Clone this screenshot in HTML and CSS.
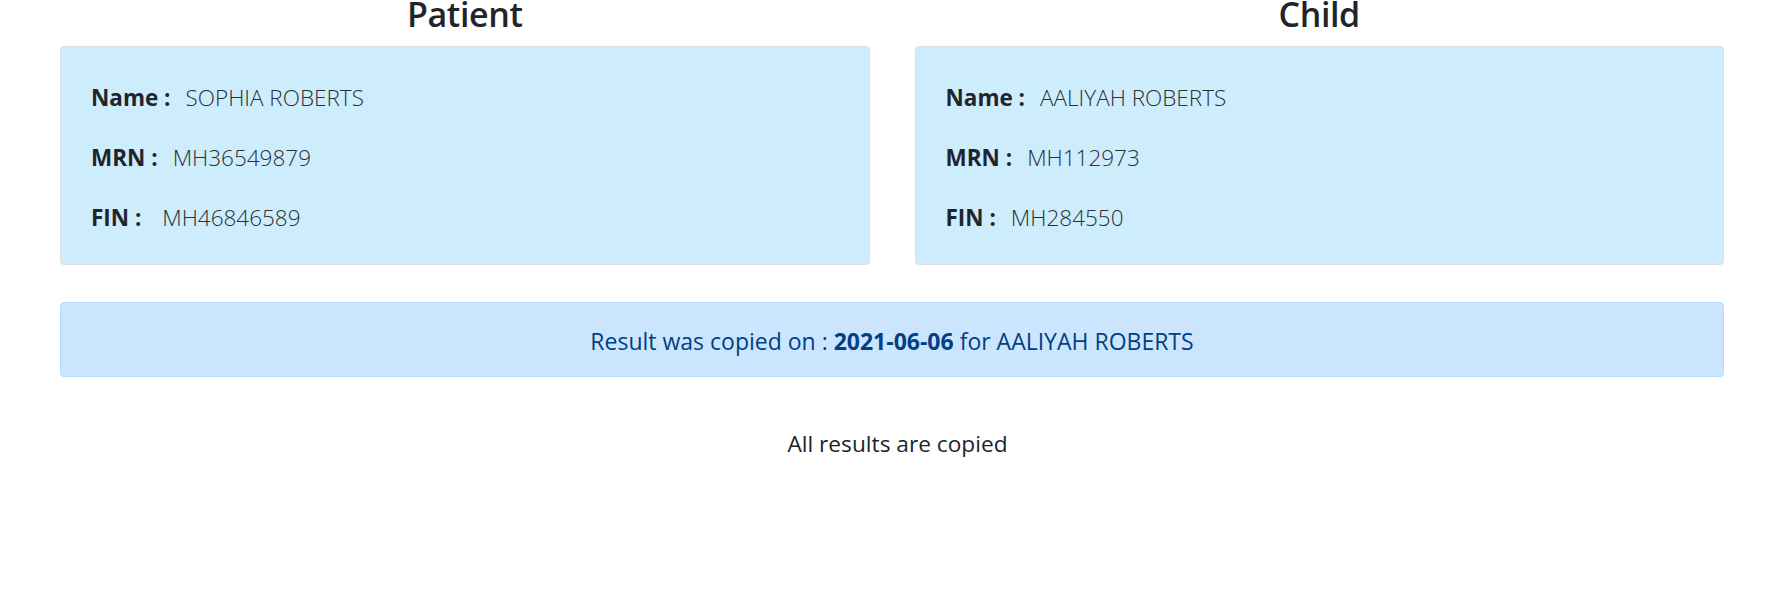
FILE: index.html
```html
<!DOCTYPE html>
<html lang="en">
<head>
<meta charset="utf-8">
<title>Copied results</title>
<link rel="stylesheet" href="styles.css">
</head>
<body>
<div class="page">
  <div class="cols">
    <section class="col">
      <h2 class="title">Patient</h2>
      <div class="card">
        <p class="row"><span class="label">Name :</span><span class="value">SOPHIA ROBERTS</span></p>
        <p class="row"><span class="label">MRN :</span><span class="value">MH36549879</span></p>
        <p class="row"><span class="label">FIN :</span><span class="value">&nbsp;MH46846589</span></p>
      </div>
    </section>
    <section class="col">
      <h2 class="title">Child</h2>
      <div class="card">
        <p class="row"><span class="label">Name :</span><span class="value">AALIYAH ROBERTS</span></p>
        <p class="row"><span class="label">MRN :</span><span class="value">MH112973</span></p>
        <p class="row"><span class="label">FIN :</span><span class="value">MH284550</span></p>
      </div>
    </section>
  </div>
  <div class="alert">Result was copied on : <strong>2021-06-06</strong> for AALIYAH ROBERTS</div>
  <p class="done">All results are copied</p>
</div>
</body>
</html>
```
FILE: styles.css
```css
html, body {
  margin: 0;
  padding: 0;
  background: #ffffff;
}
body {
  font-family: "Open Sans", "Noto Sans", sans-serif;
  color: #212529;
}
.page {
  padding: 0 66px 0 60px;
}
.cols {
  display: grid;
  grid-template-columns: 1fr 1fr;
  column-gap: 45px;
}
.title {
  margin: 0 0 18px;
  font-size: 34px;
  line-height: 28px;
  letter-spacing: -0.4px;
  font-weight: 600;
  text-align: center;
  color: #212529;
}
.card {
  background: #cdedfd;
  border: 1px solid #dcdfe2;
  border-radius: 4px;
  padding: 34px 30px 29px;
  display: flex;
  flex-direction: column;
  gap: 26px;
}
.row {
  margin: 0;
  font-size: 22.5px;
  line-height: 34px;
  white-space: nowrap;
}
.label {
  font-weight: 700;
  color: #212529;
}
.value {
  margin-left: 15px;
  font-weight: 300;
  color: #2b2f33;
}
.alert {
  margin-top: 37px;
  background: #cce5ff;
  border: 1px solid #b8daff;
  border-radius: 4px;
  color: #004085;
  text-align: center;
  font-size: 23px;
  line-height: 34px;
  padding: 21px 20px 18px;
}
.alert strong {
  font-weight: 700;
}
.done {
  margin: 50px 0 0;
  padding-left: 11px;
  text-align: center;
  font-size: 22.7px;
  line-height: 34px;
  color: #212529;
}
```
